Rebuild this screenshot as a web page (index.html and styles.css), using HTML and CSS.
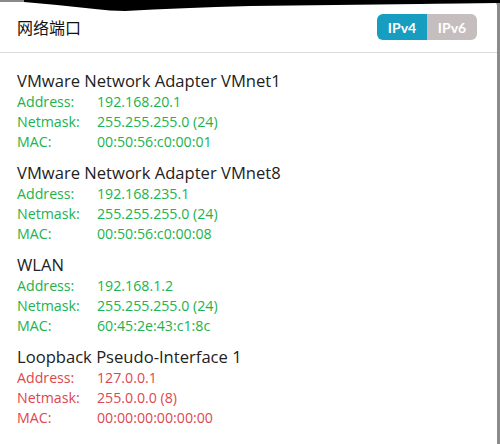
FILE: index.html
```html
<!DOCTYPE html>
<html>
<head>
<meta charset="utf-8">
<link rel="stylesheet" href="styles.css">
</head>
<body>
<div class="panel">
  <svg class="blob" width="500" height="14" viewBox="0 0 500 14">
    <rect x="0" y="0" width="26" height="2" fill="#8a8a8a"/>
    <path d="M24 0 L500 0 L500 3 L497 3 Q480 3 420 4 L250 6 Q180 8 125 11 Q110 11 95 9 Q60 5 24 2 Z" fill="#000"/>
  </svg>
  <header class="head">
    <div class="title">网络端口</div>
    <div class="seg">
      <span class="btn active">IPv4</span>
      <span class="btn">IPv6</span>
    </div>
  </header>
  <main class="list">
    <section class="iface ok">
      <div class="name">VMware Network Adapter VMnet1</div>
      <div class="row"><span class="k">Address:</span><span>192.168.20.1</span></div>
      <div class="row"><span class="k">Netmask:</span><span>255.255.255.0 (24)</span></div>
      <div class="row"><span class="k">MAC:</span><span>00:50:56:c0:00:01</span></div>
    </section>
    <section class="iface ok">
      <div class="name">VMware Network Adapter VMnet8</div>
      <div class="row"><span class="k">Address:</span><span>192.168.235.1</span></div>
      <div class="row"><span class="k">Netmask:</span><span>255.255.255.0 (24)</span></div>
      <div class="row"><span class="k">MAC:</span><span>00:50:56:c0:00:08</span></div>
    </section>
    <section class="iface ok">
      <div class="name">WLAN</div>
      <div class="row"><span class="k">Address:</span><span>192.168.1.2</span></div>
      <div class="row"><span class="k">Netmask:</span><span>255.255.255.0 (24)</span></div>
      <div class="row"><span class="k">MAC:</span><span>60:45:2e:43:c1:8c</span></div>
    </section>
    <section class="iface bad">
      <div class="name">Loopback Pseudo-Interface 1</div>
      <div class="row"><span class="k">Address:</span><span>127.0.0.1</span></div>
      <div class="row"><span class="k">Netmask:</span><span>255.0.0.0 (8)</span></div>
      <div class="row"><span class="k">MAC:</span><span>00:00:00:00:00:00</span></div>
    </section>
  </main>
</div>
</body>
</html>
```
FILE: styles.css
```css
html, body {
  margin: 0;
  padding: 0;
}
body {
  background: #8c8c8c;
  width: 500px;
  height: 444px;
  overflow: hidden;
  font-family: "Open Sans", "Noto Sans CJK SC", sans-serif;
}
.panel {
  position: relative;
  width: 497px;
  height: 444px;
  background: #fff;
  border-top-right-radius: 6px;
}
.blob {
  position: absolute;
  top: 0;
  left: 0;
}
.head {
  height: 52px;
  border-bottom: 1px solid #dcdcdc;
  display: flex;
  align-items: center;
  justify-content: space-between;
  padding: 0 20px 0 17px;
}
.title {
  font-family: "Noto Sans CJK SC", sans-serif;
  font-size: 16px;
  color: #111;
  padding-top: 2px;
}
.seg {
  display: flex;
  margin-top: 2px;
}
.btn {
  width: 50px;
  height: 26px;
  display: flex;
  align-items: center;
  justify-content: center;
  background: #c6bebe;
  color: #fff;
  font-family: "Lato", sans-serif;
  font-weight: 700;
  font-size: 14px;
  border-radius: 0 6px 6px 0;
}
.btn.active {
  background: #179dbf;
  border-radius: 6px 0 0 6px;
}
.list {
  padding: 17px 17px 0;
}
.iface {
  margin-bottom: 10px;
}
.name {
  font-size: 16.6px;
  line-height: 22px;
  color: #222;
}
.row {
  display: flex;
  font-size: 14.2px;
  line-height: 20px;
}
.k {
  width: 80px;
}
.ok .row { color: #22b24c; }
.bad .row { color: #e0474c; }
```
